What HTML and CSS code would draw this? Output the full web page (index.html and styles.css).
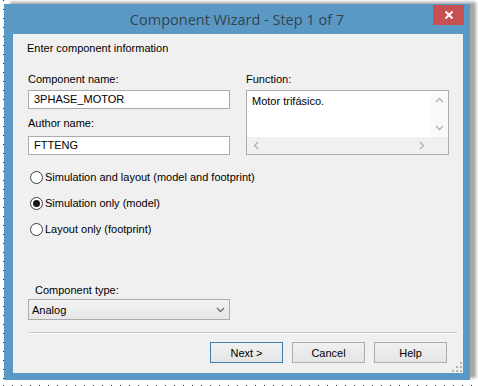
FILE: index.html
```html
<!DOCTYPE html>
<html lang="en">

<head>
  <meta charset="UTF-8">
  <title>Component Wizard - Step 1 of 7</title>
  <link rel="stylesheet" href="styles.css">
</head>

<body>
  <div class="desk">
    <div class="window">
      <div class="titlebar">
        <h1 class="title">Component Wizard - Step 1 of 7</h1>
        <button type="button" class="close">
          <svg width="10" height="10" viewBox="0 0 10 10"><path d="M1.5 1.5 L8.5 8.5 M8.5 1.5 L1.5 8.5" stroke="#fff" stroke-width="2" fill="none"/></svg>
        </button>
      </div>

      <div class="client">
        <p class="intro">Enter component information</p>

        <div class="fields">
          <div class="col-left">
            <label class="lbl">Component name:</label>
            <div class="textbox">3PHASE_MOTOR</div>
            <label class="lbl lbl-author">Author name:</label>
            <div class="textbox textbox-author">FTTENG</div>
          </div>
          <div class="col-right">
            <label class="lbl">Function:</label>
            <div class="memo">
              <div class="memo-text">Motor trifásico.</div>
              <div class="vscroll">
                <svg width="9" height="6" viewBox="0 0 9 6"><polyline points="1,5 4.5,1.5 8,5" stroke="#b0b0b0" stroke-width="1.3" fill="none"/></svg>
                <svg width="9" height="6" viewBox="0 0 9 6"><polyline points="1,1 4.5,4.5 8,1" stroke="#b0b0b0" stroke-width="1.3" fill="none"/></svg>
              </div>
              <div class="hscroll">
                <svg width="6" height="9" viewBox="0 0 6 9"><polyline points="5,1 1.5,4.5 5,8" stroke="#b0b0b0" stroke-width="1.3" fill="none"/></svg>
                <svg width="6" height="9" viewBox="0 0 6 9"><polyline points="1,1 4.5,4.5 1,8" stroke="#b0b0b0" stroke-width="1.3" fill="none"/></svg>
              </div>
              <div class="corner"></div>
            </div>
          </div>
        </div>

        <div class="radios">
          <div class="radio-row"><span class="radio"></span>Simulation and layout (model and footprint)</div>
          <div class="radio-row"><span class="radio checked"></span>Simulation only (model)</div>
          <div class="radio-row"><span class="radio"></span>Layout only (footprint)</div>
        </div>

        <label class="lbl lbl-type">Component type:</label>
        <div class="combo">
          <span>Analog</span>
          <svg width="9" height="6" viewBox="0 0 9 6"><polyline points="1,1 4.5,4.5 8,1" stroke="#707070" stroke-width="1.4" fill="none"/></svg>
        </div>

        <div class="separator"></div>

        <div class="buttons">
          <button type="button" class="btn btn-default">Next &gt;</button>
          <button type="button" class="btn">Cancel</button>
          <button type="button" class="btn">Help</button>
        </div>

        <svg class="grip" width="10" height="10" viewBox="0 0 10 10">
          <rect x="8" y="0" width="2" height="2" fill="#b4b4b4"/>
          <rect x="4" y="4" width="2" height="2" fill="#b4b4b4"/>
          <rect x="8" y="4" width="2" height="2" fill="#b4b4b4"/>
          <rect x="0" y="8" width="2" height="2" fill="#b4b4b4"/>
          <rect x="4" y="8" width="2" height="2" fill="#b4b4b4"/>
          <rect x="8" y="8" width="2" height="2" fill="#b4b4b4"/>
        </svg>
      </div>
    </div>
  </div>
</body>

</html>
```

FILE: styles.css
```css
body {
  margin: 0;
  background-color: #fff;
  font-family: "Liberation Sans", Arial, sans-serif;
  font-size: 11px;
  color: #000;
}

.desk {
  width: 478px;
  height: 386px;
  box-sizing: border-box;
  padding: 4px 8px 6px 4px;
  overflow: hidden;
  background-image:
    repeating-linear-gradient(to bottom, #222 0 1px, transparent 1px 9px),
    repeating-linear-gradient(to right, #222 0 1px, transparent 1px 9px);
  background-size: 1px 100%, 100% 1px;
  background-position: 3px 0, 3px 385px;
  background-repeat: no-repeat;
}

.window {
  width: 466px;
  height: 376px;
  background-color: #5a99c6;
  display: flex;
  flex-direction: column;
  box-shadow: 6px -2px 3px rgba(0, 0, 0, 0.35);
}

.titlebar {
  height: 30px;
  display: grid;
  grid-template-columns: 1fr auto 1fr;
}

.title {
  grid-column: 2;
  margin: 0;
  padding-top: 1px;
  font-family: "Open Sans", sans-serif;
  font-size: 14.5px;
  font-weight: normal;
  line-height: 30px;
  color: #34434f;
}

.close {
  grid-column: 3;
  justify-self: end;
  width: 31px;
  height: 20px;
  margin: 1px 6px 0 0;
  padding: 0;
  border: none;
  background-color: #c75050;
  display: flex;
  align-items: center;
  justify-content: center;
}

.client {
  position: relative;
  width: 450px;
  height: 339px;
  margin-left: 9px;
  box-sizing: border-box;
  padding: 7px 14px 0 15px;
  background-color: #f0f0f0;
  display: flex;
  flex-direction: column;
}

.intro {
  margin: 0 0 0 -1px;
  line-height: 14px;
}

.lbl {
  display: block;
  line-height: 14px;
}

.fields {
  display: flex;
  gap: 16px;
  margin-top: 17px;
}

.col-left {
  width: 202px;
}

.col-right {
  width: 203px;
}

.textbox {
  height: 19px;
  box-sizing: border-box;
  margin-top: 4px;
  padding-left: 5px;
  border: 1px solid #acacac;
  background-color: #fff;
  line-height: 17px;
}

.lbl-author {
  margin-top: 7px;
}

.textbox-author {
  margin-top: 6px;
}

.memo {
  height: 65px;
  box-sizing: border-box;
  margin-top: 4px;
  border: 1px solid #acacac;
  background-color: #fff;
  display: grid;
  grid-template-columns: 1fr 17px;
  grid-template-rows: 1fr 17px;
}

.memo-text {
  padding: 3px 5px;
  line-height: 14px;
}

.vscroll {
  display: flex;
  flex-direction: column;
  justify-content: space-between;
  align-items: center;
  padding: 6px 0;
  background-color: #fafafa;
}

.hscroll {
  display: flex;
  justify-content: space-between;
  align-items: center;
  padding: 0 6px;
  background-color: #f0f0f0;
}

.corner {
  background-color: #f0f0f0;
}

.radios {
  display: flex;
  flex-direction: column;
  gap: 6px;
  margin-top: 12px;
  padding-left: 2px;
}

.radio-row {
  height: 20px;
  display: flex;
  align-items: center;
  gap: 2px;
}

.radio {
  width: 13px;
  height: 13px;
  box-sizing: border-box;
  border: 1px solid #3c3c3c;
  border-radius: 50%;
  background-color: #fff;
  display: flex;
  align-items: center;
  justify-content: center;
}

.radio.checked::after {
  content: "";
  width: 7px;
  height: 7px;
  border-radius: 50%;
  background-color: #1a1a1a;
}

.lbl-type {
  margin-top: 44px;
  padding-left: 7px;
}

.combo {
  width: 202px;
  height: 21px;
  box-sizing: border-box;
  margin-top: 2px;
  padding: 0 4px 0 3px;
  border: 1px solid #acacac;
  background: linear-gradient(#f2f2f2, #e6e6e6);
  display: flex;
  align-items: center;
  justify-content: space-between;
}

.separator {
  height: 1px;
  margin: 12px -8px 0 1px;
  background-color: #c4c4c4;
  border-bottom: 1px solid #fff;
}

.buttons {
  display: flex;
  justify-content: flex-end;
  gap: 9px;
  margin-top: 8px;
  padding-right: 2px;
}

.btn {
  width: 73px;
  height: 21px;
  padding: 0;
  border: 1px solid #acacac;
  background: linear-gradient(#f0f0f0, #e5e5e5);
  font-family: "Liberation Sans", Arial, sans-serif;
  font-size: 11px;
  color: #000;
}

.btn-default {
  border-color: #3c7fb1;
}

.grip {
  position: absolute;
  right: 1px;
  bottom: 1px;
}
```
